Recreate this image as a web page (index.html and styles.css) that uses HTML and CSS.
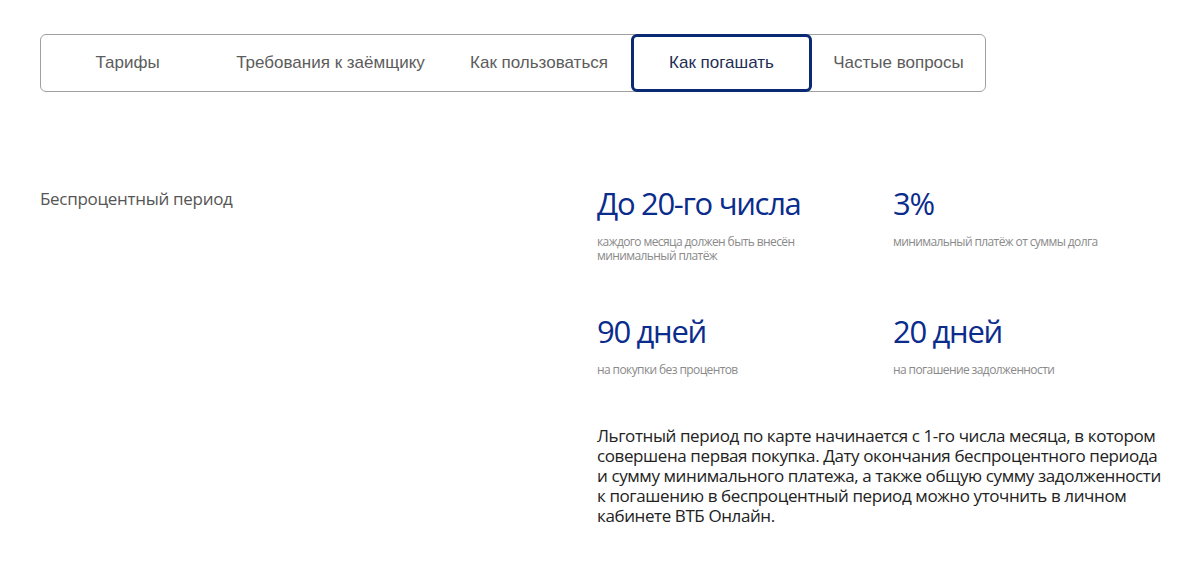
FILE: index.html
```html
<!DOCTYPE html>
<html lang="ru">
  <head>
    <meta name="viewport" content="width=device-width, initial-scale=1" />
    <title>Как погашать</title>
    <link rel="stylesheet" href="styles.css">
  </head>

  <body>
    <div class="page">
      <nav class="tabs">
        <a class="tab">Тарифы</a>
        <a class="tab">Требования к заёмщику</a>
        <a class="tab">Как пользоваться</a>
        <a class="tab active">Как погашать</a>
        <a class="tab">Частые вопросы</a>
      </nav>

      <div class="section">
        <div class="label">Беспроцентный период</div>

        <div class="content">
          <div class="stats">
            <div class="stat">
              <div class="value">До 20-го числа</div>
              <div class="caption">каждого месяца должен быть внесён<br />минимальный платёж</div>
            </div>
            <div class="stat">
              <div class="value">3%</div>
              <div class="caption">минимальный платёж от суммы долга</div>
            </div>
            <div class="stat">
              <div class="value">90 дней</div>
              <div class="caption">на покупки без процентов</div>
            </div>
            <div class="stat">
              <div class="value">20 дней</div>
              <div class="caption">на погашение задолженности</div>
            </div>
          </div>

          <p class="text">
            Льготный период по карте начинается с 1-го числа месяца, в котором
            совершена первая покупка. Дату окончания беспроцентного периода
            и сумму минимального платежа, а также общую сумму задолженности
            к погашению в беспроцентный период можно уточнить в личном
            кабинете ВТБ Онлайн.
          </p>
        </div>
      </div>
    </div>
  </body>
</html>
```

FILE: styles.css
```css
body {
  margin: 0;
  background-color: #ffffff;
  font-family: "Open Sans", sans-serif;
  color: #222222;
}

.page {
  padding: 34px 0 0 40px;
}

.tabs {
  display: grid;
  grid-template-columns: 173px 233px 184px 181px 1fr;
  width: 946px;
  height: 58px;
  box-sizing: border-box;
  border: 1px solid #a0a0a0;
  border-radius: 6px;
}

.tab {
  display: flex;
  align-items: center;
  justify-content: center;
  font-family: "Liberation Sans", Arial, sans-serif;
  font-size: 17px;
  color: #5c5c5c;
  white-space: nowrap;
}

.tab.active {
  margin: -1px 0;
  border: 3px solid #0b2a74;
  border-radius: 6px;
  color: #1f2e55;
}

.section {
  display: flex;
  margin-top: 91px;
}

.label {
  flex: 0 0 557px;
  padding-top: 4px;
  font-size: 17px;
  color: #555555;
  letter-spacing: -0.3px;
}

.content {
  flex: 0 0 570px;
}

.stats {
  display: grid;
  grid-template-columns: 296px 274px;
  row-gap: 48px;
}

.value {
  font-size: 31px;
  line-height: 40px;
  color: #0b2c8c;
  letter-spacing: -1.3px;
}

.caption {
  margin-top: 12px;
  font-size: 12px;
  line-height: 14px;
  color: #8a8a8a;
  letter-spacing: -0.6px;
}

.text {
  width: 566px;
  margin: 49px 0 0 0;
  font-size: 17px;
  line-height: 20px;
  color: #222222;
  letter-spacing: -0.4px;
}
```
